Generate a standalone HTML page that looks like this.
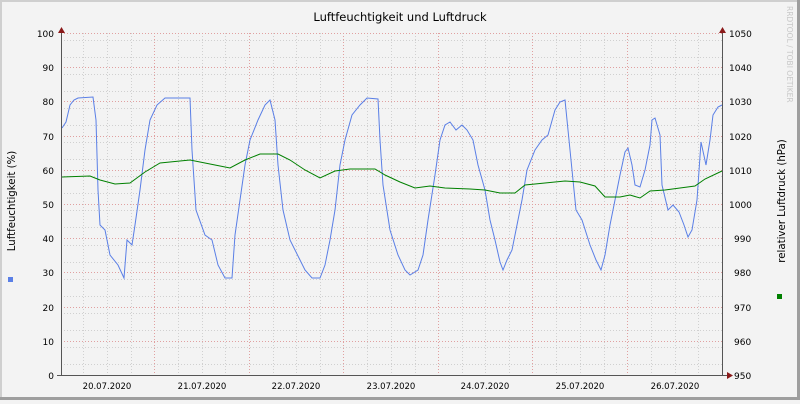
<!DOCTYPE html><html><head><style>
body{margin:0;width:800px;height:400px;overflow:hidden;background:#f3f3f3;font-family:"DejaVu Sans","Liberation Sans",sans-serif}
</style></head><body>
<svg width="800" height="400" xmlns="http://www.w3.org/2000/svg" font-family="DejaVu Sans, Liberation Sans, sans-serif">
<rect x="0" y="0" width="800" height="400" fill="#f3f3f3"/>
<rect x="0" y="0" width="800" height="2" fill="#cfcfcf"/><rect x="0" y="0" width="2" height="400" fill="#cfcfcf"/>
<rect x="797" y="0" width="3" height="400" fill="#9e9e9e"/><rect x="0" y="397" width="800" height="3" fill="#9e9e9e"/>
<g stroke="#d0d0d0" stroke-dasharray="1,2" stroke-width="1">
<path d="M61 40.5H722M61 57.5H722M61 74.5H722M61 91.5H722M61 108.5H722M61 125.5H722M61 142.5H722M61 159.5H722M61 176.5H722M61 193.5H722M61 210.5H722M61 227.5H722M61 245.5H722M61 262.5H722M61 279.5H722M61 296.5H722M61 313.5H722M61 330.5H722M61 347.5H722M61 364.5H722"/>
<path d="M83.5 33V375M107.5 33V375M131.5 33V375M178.5 33V375M202.5 33V375M225.5 33V375M273.5 33V375M296.5 33V375M320.5 33V375M367.5 33V375M391.5 33V375M415.5 33V375M462.5 33V375M485.5 33V375M509.5 33V375M556.5 33V375M580.5 33V375M604.5 33V375M651.5 33V375M675.5 33V375M698.5 33V375"/>
</g>
<g stroke="#e0a0a0" stroke-dasharray="1,2" stroke-width="1">
<path d="M61 33.5H722M61 67.5H722M61 101.5H722M61 136.5H722M61 170.5H722M61 204.5H722M61 238.5H722M61 272.5H722M61 307.5H722M61 341.5H722"/>
<path d="M154.5 33V375M249.5 33V375M343.5 33V375M438.5 33V375M532.5 33V375M627.5 33V375"/>
</g>
<polyline fill="none" stroke="#5a7fe6" stroke-width="1" points="62,128 66,122 70,105 74,100 78,98 93,97 96,120 98,190 100,225 105,230 110,255 118,265 124,278 127,240 132,245 135,225 140,190 145,150 150,120 157,105 165,98 190,98 192,150 196,210 205,235 212,240 218,265 225,278 232,278 235,235 240,200 245,165 250,140 258,120 265,105 270,100 275,120 278,165 283,210 290,240 300,260 305,270 312,278 320,278 325,265 330,240 335,210 340,165 345,140 352,115 360,105 367,98 378,99 380,140 383,185 390,230 398,255 405,270 410,275 418,270 423,255 428,220 435,175 440,140 445,125 450,122 456,130 462,125 467,130 473,140 478,165 485,190 490,220 495,240 500,262 503,270 507,260 512,250 517,225 522,200 527,170 535,150 542,140 548,135 555,110 560,102 565,100 568,130 572,170 576,210 582,220 590,245 596,260 601,270 605,255 610,225 615,200 620,175 625,152 628,148 632,165 635,185 640,187 645,170 650,145 652,120 655,118 660,135 662,185 668,210 673,205 679,212 684,225 688,237 692,230 697,200 701,142 706,165 710,140 713,115 718,107 722,105"/>
<polyline fill="none" stroke="#008000" stroke-width="1" points="62,177 90,176 100,180 115,184 130,183 145,172 160,163 190,160 215,165 230,168 245,160 260,154 278,154 290,160 305,170 320,178 335,171 350,169 375,169 385,175 400,182 415,188 430,186 445,188 470,189 485,190 500,193 515,193 525,185 545,183 565,181 580,182 595,186 605,197 620,197 630,195 640,198 650,191 665,190 680,188 695,186 705,179 722,171"/>
<path d="M61.5 30V376M722.5 30V376M57 375.5H727" stroke="#555" stroke-width="1"/>
<path d="M58 33L61.5 27L65 33Z M719 33L722.5 27L726 33Z M727 372L733 375.5L727 379Z" fill="#8b1a1a"/>
<text x="400" y="21" text-anchor="middle" font-size="11.5" fill="#000">Luftfeuchtigkeit und Luftdruck</text>
<g font-size="9" fill="#000" text-anchor="end">
<text x="54" y="37">100</text><text x="54" y="71">90</text><text x="54" y="105">80</text><text x="54" y="140">70</text><text x="54" y="174">60</text><text x="54" y="208">50</text><text x="54" y="242">40</text><text x="54" y="276">30</text><text x="54" y="311">20</text><text x="54" y="345">10</text><text x="54" y="379">0</text>
</g>
<g font-size="9" fill="#000">
<text x="729" y="37">1050</text><text x="729" y="71">1040</text><text x="729" y="105">1030</text><text x="729" y="140">1020</text><text x="729" y="174">1010</text><text x="729" y="208">1000</text><text x="734" y="242">990</text><text x="734" y="276">980</text><text x="734" y="311">970</text><text x="734" y="345">960</text><text x="734" y="379">950</text>
</g>
<g font-size="8.5" fill="#000" text-anchor="middle">
<text x="107" y="389">20.07.2020</text><text x="202" y="389">21.07.2020</text><text x="296" y="389">22.07.2020</text><text x="391" y="389">23.07.2020</text><text x="485" y="389">24.07.2020</text><text x="580" y="389">25.07.2020</text><text x="675" y="389">26.07.2020</text>
</g>
<text transform="translate(15,201) rotate(-90)" font-size="10.2" text-anchor="middle">Luftfeuchtigkeit (%)</text>
<text transform="translate(785,201) rotate(-90)" font-size="10.2" text-anchor="middle">relativer Luftdruck (hPa)</text>
<rect x="8" y="277" width="5" height="5" fill="#5a7fe6"/>
<rect x="777" y="294" width="5" height="5" fill="#008000"/>
<text transform="translate(787,6) rotate(90)" font-size="7.5" fill="#c8c8c8">RRDTOOL / TOBI OETIKER</text>
</svg>
</body></html>
